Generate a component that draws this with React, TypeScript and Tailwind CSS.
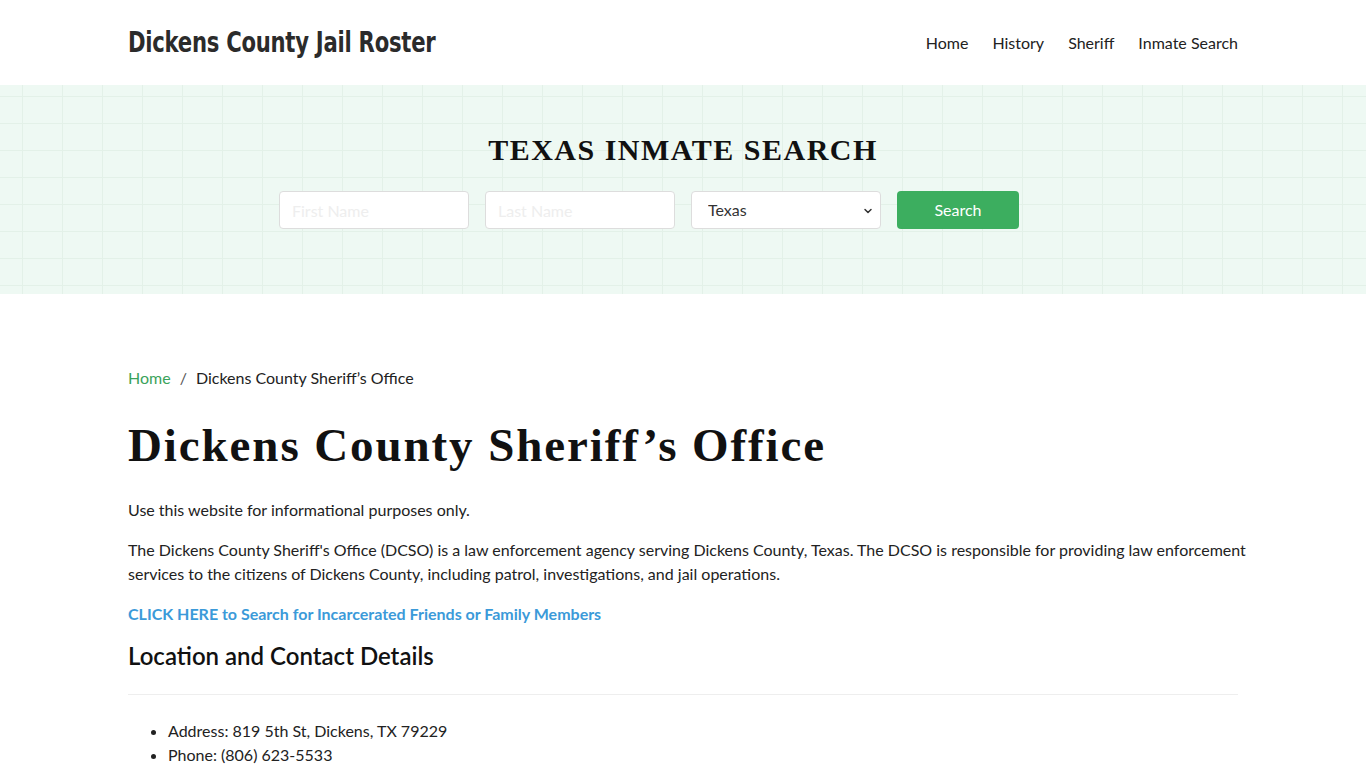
import { ChevronDown } from "lucide-react"

const navLinks = ["Home", "History", "Sheriff", "Inmate Search"]

function Header() {
  return (
    <header className="bg-white">
      <div className="mx-auto flex h-[85px] w-[1110px] items-center justify-between">
        <a
          href="#"
          className="text-[28px] font-bold tracking-[-0.3px] text-[#2b2b2b] [font-family:'DejaVu_Sans_Condensed','DejaVu_Sans',sans-serif] [transform:scaleX(0.84)] origin-left"
        >
          Dickens County Jail Roster
        </a>
        <nav className="flex items-center gap-[24px] text-[16px] text-[#222]">
          {navLinks.map((l) => (
            <a key={l} href="#">
              {l}
            </a>
          ))}
        </nav>
      </div>
    </header>
  )
}

function SearchHero() {
  return (
    <section className="h-[209px] bg-[#eef9f3] bg-[linear-gradient(to_right,#e3f1e8_1px,transparent_1px),linear-gradient(to_bottom,#e3f1e8_1px,transparent_1px)] bg-[size:40px_27px] bg-[position:22px_11px]">
      <div className="flex flex-col items-center pt-[48px]">
        <h2 className="text-[30px] font-bold tracking-[1.5px] text-[#111] [font-family:'Liberation_Serif',serif] leading-[34px]">
          TEXAS INMATE SEARCH
        </h2>
        <form className="mt-[24px] flex gap-[16px] pr-[68px]">
          <input
            placeholder="First Name"
            className="h-[38px] w-[190px] rounded-[4px] border border-[#ddd] bg-white px-[12px] text-[16px] placeholder:text-[#eee] outline-none"
          />
          <input
            placeholder="Last Name"
            className="h-[38px] w-[190px] rounded-[4px] border border-[#ddd] bg-white px-[12px] text-[16px] placeholder:text-[#eee] outline-none"
          />
          <div className="relative h-[38px] w-[190px] rounded-[4px] border border-[#ddd] bg-white">
            <select className="h-full w-full appearance-none bg-transparent pl-[16px] text-[16px] text-[#333] outline-none">
              <option>Texas</option>
            </select>
            <ChevronDown className="pointer-events-none absolute right-[6px] top-[13px] h-[12px] w-[12px] text-[#333]" strokeWidth={3} />
          </div>
          <button
            type="button"
            className="h-[38px] w-[122px] rounded-[4px] bg-[#3cae5f] text-[16px] text-white"
          >
            Search
          </button>
        </form>
      </div>
    </section>
  )
}

function Content() {
  return (
    <main className="mx-auto w-[1110px] pt-[74px] text-[16px] text-[#222]">
      <div className="flex items-center leading-[20px]">
        <a href="#" className="text-[#3aa35b]">
          Home
        </a>
        <span className="px-[9px] text-[#555]">/</span>
        <span>Dickens County Sheriff’s Office</span>
      </div>
      <h1 className="mt-[32px] text-[47px] font-bold leading-[50px] tracking-[1.9px] text-[#111] [font-family:'Liberation_Serif',serif]">
        Dickens County Sheriff’s Office
      </h1>
      <p className="mt-[28px] leading-[24px]">Use this website for informational purposes only.</p>
      <p className="mt-[16px] -mr-[8px] leading-[24px]">
        The Dickens County Sheriff's Office (DCSO) is a law enforcement agency serving Dickens County, Texas. The DCSO is responsible for providing law enforcement services to the citizens of Dickens County, including patrol, investigations, and jail operations.
      </p>
      <a href="#" className="mt-[16px] block font-bold leading-[24px] text-[#3b9ad9]">
        CLICK HERE to Search for Incarcerated Friends or Family Members
      </a>
      <h3 className="mt-[15px] text-[24px] font-semibold leading-[30px] text-[#111]">
        Location and Contact Details
      </h3>
      <hr className="mt-[23px] border-[#eee]" />
      <ul className="mt-[24px] list-disc pl-[40px] leading-[24px]">
        <li>Address: 819 5th St, Dickens, TX 79229</li>
        <li>Phone: (806) 623-5533</li>
      </ul>
    </main>
  )
}

export default function App() {
  return (
    <div className="min-h-screen bg-white [font-family:Lato,'Noto_Sans',sans-serif]">
      <Header />
      <SearchHero />
      <Content />
    </div>
  )
}
